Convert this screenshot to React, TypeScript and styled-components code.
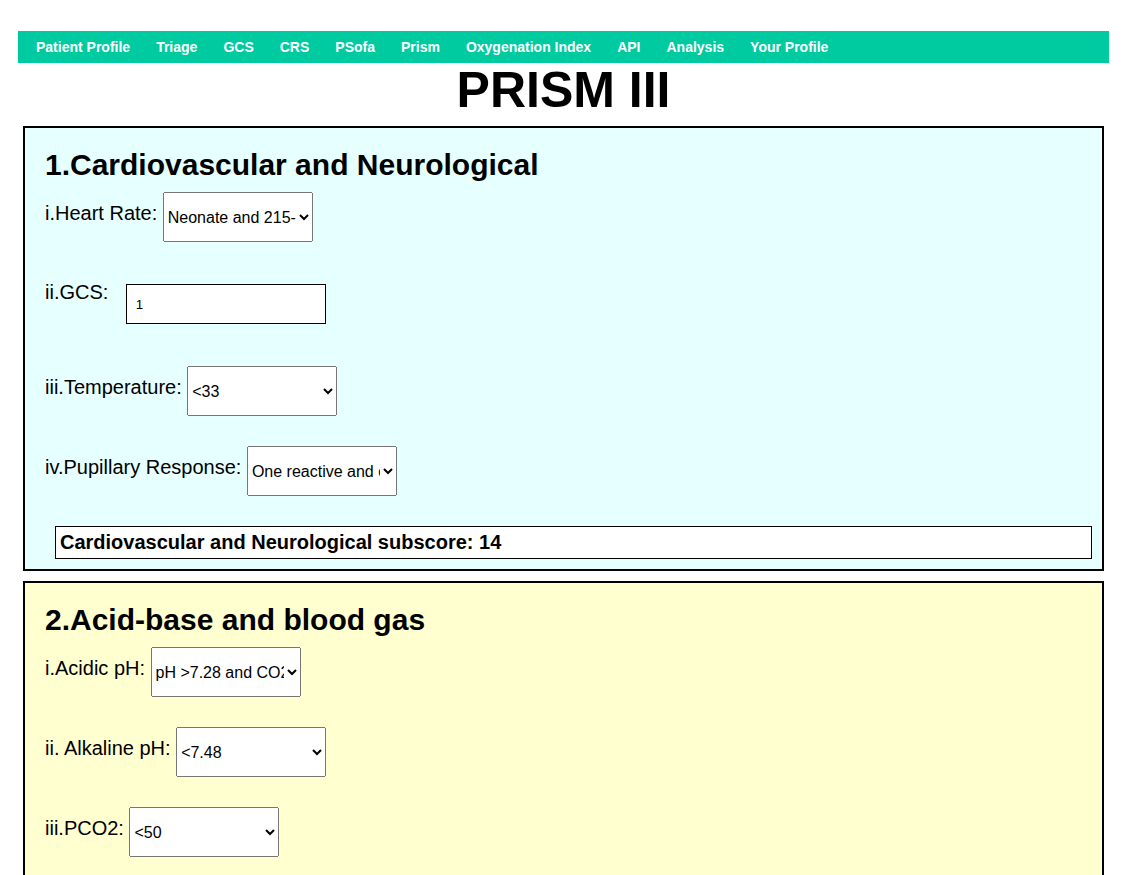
import React from "react";
import styled, { createGlobalStyle } from "styled-components";

const GlobalStyle = createGlobalStyle`
  body {
    margin: 8px;
    background: #ffffff;
    font-family: "Liberation Sans", Arial, sans-serif;
    color: #000000;
  }
`;

const Page = styled.div`
  width: 1091px;
  margin: 23px 0 0 10px;
`;

const NavBar = styled.nav`
  display: flex;
  height: 32px;
  background: #00cba0;
`;

const NavItem = styled.a`
  display: flex;
  align-items: center;
  padding: 0 7px 0 19px;
  font-size: 14px;
  font-weight: bold;
  color: #ffffff;
  text-decoration: none;
  white-space: nowrap;
  background: #00cba0;
  &:first-child {
    padding-left: 18px;
  }
`;

const Title = styled.h1`
  margin: 0;
  font-size: 50px;
  line-height: 55px;
  font-weight: bold;
  text-align: center;
`;

const Section = styled.section<{ $bg: string; $mt: number }>`
  margin: ${(p) => p.$mt}px 5px 0 5px;
  border: 2px solid #000000;
  background: ${(p) => p.$bg};
  padding: 20px 10px 10px 20px;
  display: flex;
  flex-direction: column;
`;

const Heading = styled.h2`
  margin: 0;
  font-size: 30px;
  line-height: 34px;
  font-weight: bold;
`;

const Row = styled.div<{ $mt: number }>`
  display: flex;
  align-items: flex-start;
  gap: 5.5px;
  margin-top: ${(p) => p.$mt}px;
`;

const Label = styled.label<{ $pt: number }>`
  font-size: 20px;
  line-height: 23px;
  padding-top: ${(p) => p.$pt}px;
  white-space: nowrap;
`;

const Select = styled.select`
  width: 150px;
  height: 50px;
  font-family: "Liberation Sans", Arial, sans-serif;
  font-size: 16px;
  color: #000000;
`;

const TextInput = styled.input`
  box-sizing: border-box;
  width: 200px;
  height: 40px;
  margin: 3px 0 0 12px;
  padding: 0 9px;
  border: 1px solid #000000;
  background: #ffffff;
  font-family: "Liberation Sans", Arial, sans-serif;
  font-size: 13.33px;
  color: #000000;
`;

const Subscore = styled.div`
  box-sizing: border-box;
  margin: 30px 0 0 10px;
  height: 33px;
  padding: 4px 4px;
  border: 1px solid #000000;
  background: #ffffff;
  font-size: 20px;
  line-height: 23px;
  font-weight: bold;
`;

const navItems = [
  "Patient Profile",
  "Triage",
  "GCS",
  "CRS",
  "PSofa",
  "Prism",
  "Oxygenation Index",
  "API",
  "Analysis",
  "Your Profile",
];

type SelField = { label: string; options: string[] };

const SelectRow: React.FC<{ field: SelField; mt: number }> = ({ field, mt }) => (
  <Row $mt={mt}>
    <Label $pt={10}>{field.label}</Label>
    <Select defaultValue={field.options[0]}>
      {field.options.map((o) => (
        <option key={o} value={o}>
          {o}
        </option>
      ))}
    </Select>
  </Row>
);

const acidFields: SelField[] = [
  { label: "i.Acidic pH:", options: ["pH >7.28 and CO2 <16.9", "pH 7.0-7.28 or CO2 5-16.9", "pH <7.0 or CO2 <5"] },
  { label: "ii. Alkaline pH:", options: ["<7.48", "7.48-7.55", ">7.55"] },
  { label: "iii.PCO2:", options: ["<50", "50-75", ">75"] },
  { label: "iv.Total CO2:", options: ["<34", ">34"] },
  { label: "v.PaO2:", options: [">50", "42-49.9", "<42"] },
];

export default function App() {
  return (
    <>
      <GlobalStyle />
      <Page>
        <NavBar>
          {navItems.map((n) => (
            <NavItem key={n} href="#">
              {n}
            </NavItem>
          ))}
        </NavBar>
        <Title>PRISM III</Title>

        <Section $bg="#e6ffff" $mt={8}>
          <Heading>1.Cardiovascular and Neurological</Heading>
          <SelectRow
            mt={10}
            field={{ label: "i.Heart Rate:", options: ["Neonate and 215-225", "Neonate and <215", "Neonate and >225"] }}
          />
          <Row $mt={39}>
            <Label $pt={0}>ii.GCS:</Label>
            <TextInput type="text" defaultValue="1" />
          </Row>
          <SelectRow mt={42} field={{ label: "iii.Temperature:", options: ["<33", "33-40", ">40"] }} />
          <SelectRow
            mt={30}
            field={{ label: "iv.Pupillary Response:", options: ["One reactive and one fixed", "Both reactive", "Both fixed"] }}
          />
          <Subscore>Cardiovascular and Neurological subscore: 14</Subscore>
        </Section>

        <Section $bg="#ffffd0" $mt={10}>
          <Heading>2.Acid-base and blood gas</Heading>
          {acidFields.map((f, i) => (
            <SelectRow key={f.label} mt={i === 0 ? 10 : 30} field={f} />
          ))}
          <Subscore>Acid-base and blood gas subscore: 0</Subscore>
        </Section>
      </Page>
    </>
  );
}
